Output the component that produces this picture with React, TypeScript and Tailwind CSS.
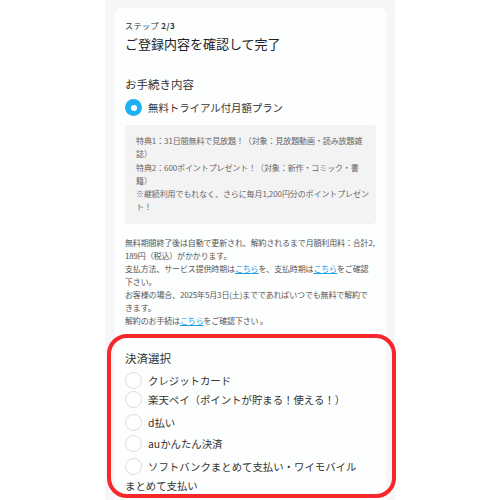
const FONT = "font-['Noto_Sans_CJK_JP','Noto_Sans',sans-serif]";

function Radio({ checked = false }: { checked?: boolean }) {
  if (checked) {
    return (
      <span className="inline-flex h-[17px] w-[17px] shrink-0 items-center justify-center rounded-full bg-[#1eb0f2] align-middle">
        <span className="h-[6px] w-[6px] rounded-full bg-white" />
      </span>
    );
  }
  return (
    <span className="inline-block h-[17px] w-[17px] shrink-0 rounded-full border border-[#dcdcdc] bg-white align-middle" />
  );
}

function A({ children }: { children: React.ReactNode }) {
  return <span className="text-[#1a9fe6] underline">{children}</span>;
}

const PAYMENTS = [
  { label: "クレジットカード", mt: "mt-[6px]" },
  { label: "楽天ペイ（ポイントが貯まる！使える！）", mt: "mt-0" },
  { label: "d払い", mt: "mt-[4px]" },
  { label: "auかんたん決済", mt: "mt-[3px]" },
  { label: "ソフトバンクまとめて支払い・ワイモバイルまとめて支払い", mt: "mt-[4px]" },
];

export default function App() {
  return (
    <div className={`h-[500px] w-full overflow-hidden bg-white ${FONT}`}>
      <div className="relative mx-auto h-[500px] w-[290px] bg-[#f5f6f8] pl-[10px] pr-[9px] pt-[8px]">
        <div className="h-[520px] rounded-[6px] bg-[#fdfefe] px-[10px] pt-[12px] text-[#333]">
          {/* Step */}
          <p className="text-[8px] leading-[12px] tracking-[0.5px] text-[#333]">
            ステップ <span className="font-bold">2/3</span>
          </p>
          <h1 className="mt-[4px] text-[13px] leading-[16px] text-[#222]">ご登録内容を確認して完了</h1>

          {/* Plan */}
          <h2 className="mt-[25px] text-[11.5px] leading-[14px]">お手続き内容</h2>
          <div className="mt-[8px] flex items-center gap-[6px]">
            <Radio checked />
            <span className="text-[10.4px] leading-[14px]">無料トライアル付月額プラン</span>
          </div>

          <div className="mt-[9px] whitespace-nowrap rounded-[4px] bg-[#f3f3f4] pb-[10px] pl-[11px] pr-[8px] pt-[9px] text-[8px] leading-[13.3px] tracking-[-0.1px] text-[#666]">
            <p>
              特典1：31日間無料で見放題！（対象：見放題動画・読み放題雑
              <br />
              誌）
            </p>
            <p>
              特典2：600ポイントプレゼント！（対象：新作・コミック・書
              <br />
              籍）
            </p>
            <p>
              ※継続利用でもれなく、さらに毎月1,200円分のポイントプレゼン
              <br />
              ト！
            </p>
          </div>

          <div className="mt-[12px] whitespace-nowrap text-[8px] leading-[13px] tracking-[-0.15px] text-[#555]">
            <p>
              無料期間終了後は自動で更新され、解約されるまで月額利用料：合計2,
              <br />
              189円（税込）がかかります。
            </p>
            <p>
              支払方法、サービス提供時期は<A>こちら</A>を、支払時期は<A>こちら</A>をご確認
              <br />
              下さい。
            </p>
            <p>
              お客様の場合、2025年5月3日(土)までであればいつでも無料で解約で
              <br />
              きます。
            </p>
            <p>
              解約のお手続は<A>こちら</A>をご確認下さい 。
            </p>
          </div>

          {/* Payment */}
          <h2 className="mt-[24px] text-[11.5px] leading-[14px]">決済選択</h2>
          {PAYMENTS.map((p) => (
            <p key={p.label} className={`${p.mt} pr-[14px] text-[10.4px] leading-[17px]`}>
              <Radio />
              <span className="ml-[6px] align-middle">{p.label}</span>
            </p>
          ))}
        </div>

        {/* annotation */}
        <div className="pointer-events-none absolute left-[2px] top-[334px] h-[164px] w-[289px] rounded-[20px] border-[4px] border-[#f8272b]" />
      </div>
    </div>
  );
}
